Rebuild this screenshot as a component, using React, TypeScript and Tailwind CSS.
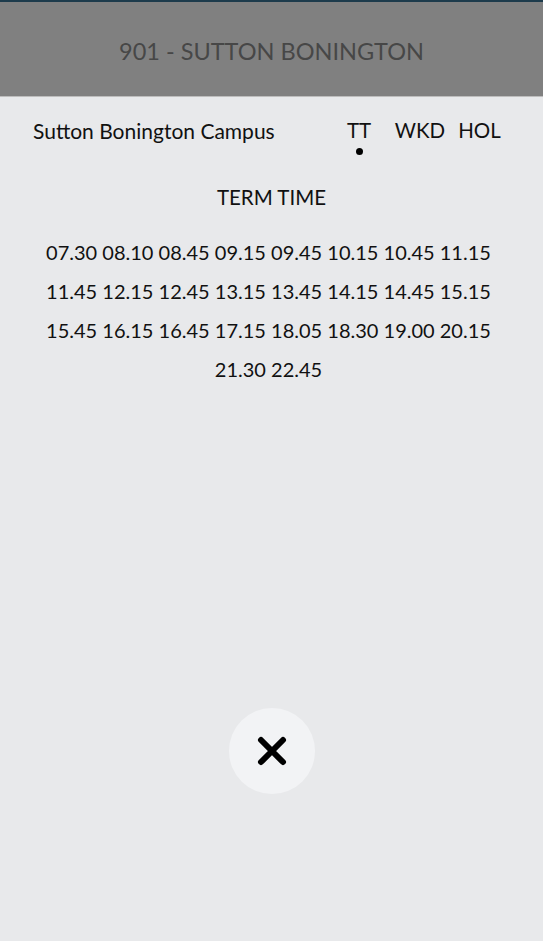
import React from 'react';

const times = [
  '07.30', '08.10', '08.45', '09.15', '09.45', '10.15', '10.45', '11.15',
  '11.45', '12.15', '12.45', '13.15', '13.45', '14.15', '14.45', '15.15',
  '15.45', '16.15', '16.45', '17.15', '18.05', '18.30', '19.00', '20.15',
  '21.30', '22.45',
];

const tabs = [
  { label: 'TT', w: 'w-[40px]', active: true },
  { label: 'WKD', w: 'w-[56px] ml-[13px]', active: false },
  { label: 'HOL', w: 'w-[53px] ml-[5px]', active: false },
];

export default function App() {
  const rows: string[][] = [];
  for (let i = 0; i < times.length; i += 8) rows.push(times.slice(i, i + 8));

  return (
    <div className="w-[543px] h-[941px] bg-[#e8e9eb] flex flex-col" style={{ fontFamily: 'Lato, "Noto Sans", sans-serif' }}>
      {/* Header */}
      <div className="h-[2px] bg-[#1d3b4c]" />
      <div className="h-[95px] bg-[#808080] flex items-center justify-center border-b border-[#bdbdbd]">
        <span className="text-[23.5px] text-[#474747] pt-[6px]">901 - SUTTON BONINGTON</span>
      </div>

      {/* Campus + tabs */}
      <div className="flex items-start pl-[33px] pr-[37px] pt-[18px]">
        <span className="text-[21px] text-[#111]">Sutton Bonington Campus</span>
        <div className="ml-auto flex">
          {tabs.map((t) => (
            <div key={t.label} className={`flex flex-col items-center ${t.w}`}>
              <span className="text-[20.5px] text-[#111]">{t.label}</span>
              {t.active && <span className="w-[7px] h-[7px] rounded-full bg-black mt-[2px]" />}
            </div>
          ))}
        </div>
      </div>

      {/* Timetable */}
      <div className="text-center text-[20.5px] text-[#111] mt-[27px]">TERM TIME</div>
      <div className="flex flex-col items-center mt-[25px] gap-[11px] pr-[6px]">
        {rows.map((r, i) => (
          <div key={i} className="text-[20px] text-[#111] leading-[28px]">{r.join(' ')}</div>
        ))}
      </div>

      {/* Close */}
      <div className="mt-auto mb-[147px] flex justify-center">
        <button className="w-[86px] h-[86px] rounded-full bg-[#f2f3f5] flex items-center justify-center">
          <svg width="30" height="30" viewBox="0 0 30 30">
            <path d="M4 4 L26 26 M26 4 L4 26" stroke="#000" strokeWidth="6" strokeLinecap="round" />
          </svg>
        </button>
      </div>
    </div>
  );
}
